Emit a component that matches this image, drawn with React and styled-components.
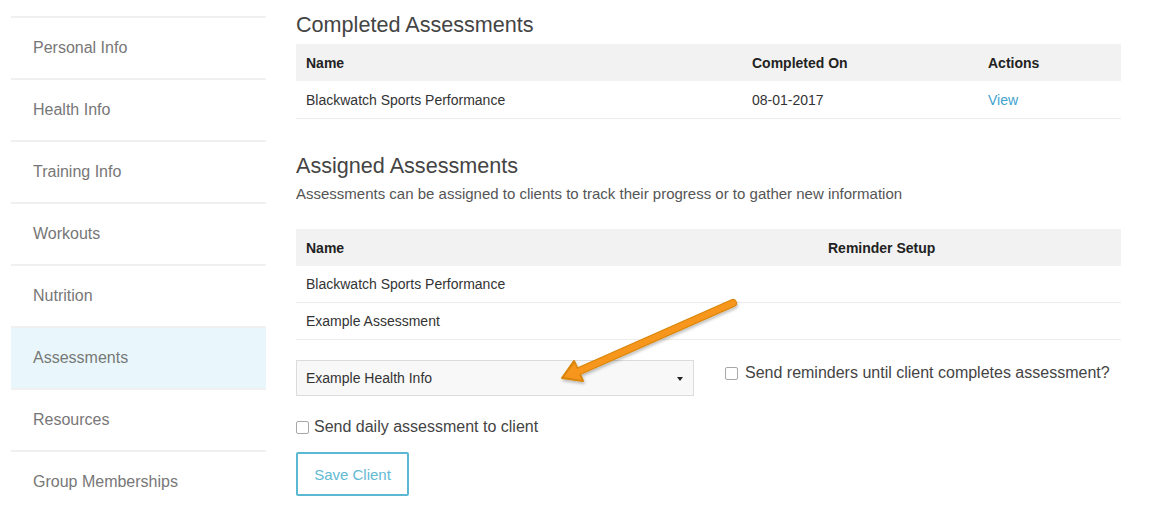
import React from "react";
import styled, { createGlobalStyle } from "styled-components";

const GlobalStyle = createGlobalStyle`
  html, body {
    margin: 0;
    padding: 0;
    background: #fff;
    font-family: "Liberation Sans", Arial, sans-serif;
    color: #333;
  }
`;

const Page = styled.div`
  position: relative;
  display: flex;
  gap: 30px;
  width: 1151px;
  height: 511px;
  overflow: hidden;
  padding-left: 11px;
  box-sizing: border-box;
`;

const Sidebar = styled.ul`
  list-style: none;
  margin: 0;
  padding: 16px 0 0;
  width: 255px;
  flex-shrink: 0;
`;

const NavItem = styled.li`
  display: flex;
  align-items: center;
  height: 60px;
  padding-left: 22px;
  border-top: 2px solid #f0f0f0;
  background: ${(p) => (p.active ? "#e9f7fc" : "transparent")};
  color: #777;
  font-size: 16px;
`;

const Main = styled.div`
  width: 825px;
  padding-top: 12px;
`;

const Heading = styled.h2`
  margin: ${(p) => (p.spaced ? "34px" : "0")} 0 6px;
  font-size: 21.6px;
  font-weight: normal;
  line-height: 26px;
  color: #444;
`;

const Intro = styled.p`
  margin: 2px 0 26px;
  font-size: 15px;
  line-height: 18px;
  color: #555;
`;

const Table = styled.table`
  width: 100%;
  table-layout: fixed;
  border-collapse: collapse;
  font-size: 14px;
`;

const Th = styled.th`
  text-align: left;
  font-weight: bold;
  background: #f2f2f2;
  height: 37px;
  padding: 0 10px;
  box-sizing: border-box;
  width: ${(p) => p.w || "auto"};
  color: #222;
`;

const Td = styled.td`
  height: ${(p) => p.h || "36px"};
  padding: 0 10px;
  border-bottom: 1px solid #ececec;
  color: #333;
`;

const Link = styled.a`
  color: #3fa3cf;
  text-decoration: none;
`;

const FormRow = styled.div`
  display: flex;
  align-items: flex-start;
  gap: 31px;
  margin-top: 20px;
`;

const Select = styled.div`
  position: relative;
  display: flex;
  align-items: center;
  width: 398px;
  height: 36px;
  padding: 0 9px;
  box-sizing: border-box;
  background: #f8f8f8;
  border: 1px solid #dcdcdc;
  font-size: 14px;
  color: #333;
`;

const Caret = styled.span`
  position: absolute;
  right: 10px;
  top: 16px;
  border-left: 3px solid transparent;
  border-right: 3px solid transparent;
  border-top: 4px solid #222;
`;

const CheckLabel = styled.label`
  display: flex;
  align-items: center;
  gap: ${(p) => p.gap || "7px"};
  margin-top: ${(p) => p.top || "0"};
  font-size: 16px;
  color: #444;
`;

const Box = styled.span`
  display: inline-block;
  width: 11px;
  height: 11px;
  border: 1px solid #a8a8a8;
  border-radius: 2px;
  background: #fff;
  flex-shrink: 0;
`;

const Button = styled.button`
  margin-top: 16px;
  width: 113px;
  height: 44px;
  border: 2px solid #5bb8d2;
  border-radius: 2px;
  background: #fff;
  color: #62bad3;
  font-family: inherit;
  font-size: 15px;
`;

const Overlay = styled.svg`
  position: absolute;
  left: 0;
  top: 0;
  pointer-events: none;
`;

const nav = [
  "Personal Info",
  "Health Info",
  "Training Info",
  "Workouts",
  "Nutrition",
  "Assessments",
  "Resources",
  "Group Memberships",
];

export default function App() {
  return (
    <Page>
      <GlobalStyle />
      <Sidebar>
        {nav.map((n) => (
          <NavItem key={n} active={n === "Assessments"}>
            {n}
          </NavItem>
        ))}
      </Sidebar>
      <Main>
        <Heading>Completed Assessments</Heading>
        <Table>
          <thead>
            <tr>
              <Th w="446px">Name</Th>
              <Th w="236px">Completed On</Th>
              <Th>Actions</Th>
            </tr>
          </thead>
          <tbody>
            <tr>
              <Td h="37px">Blackwatch Sports Performance</Td>
              <Td h="37px">08-01-2017</Td>
              <Td h="37px">
                <Link href="#">View</Link>
              </Td>
            </tr>
          </tbody>
        </Table>

        <Heading spaced>Assigned Assessments</Heading>
        <Intro>
          Assessments can be assigned to clients to track their progress or to
          gather new information
        </Intro>
        <Table>
          <thead>
            <tr>
              <Th w="522px">Name</Th>
              <Th>Reminder Setup</Th>
            </tr>
          </thead>
          <tbody>
            <tr>
              <Td>Blackwatch Sports Performance</Td>
              <Td />
            </tr>
            <tr>
              <Td>Example Assessment</Td>
              <Td />
            </tr>
          </tbody>
        </Table>

        <FormRow>
          <Select>
            Example Health Info
            <Caret />
          </Select>
          <CheckLabel top="4px">
            <Box />
            Send reminders until client completes assessment?
          </CheckLabel>
        </FormRow>
        <CheckLabel top="22px" gap="5px">
          <Box />
          Send daily assessment to client
        </CheckLabel>
        <Button>Save Client</Button>
      </Main>

      <Overlay width="1151" height="511" viewBox="0 0 1151 511">
        <defs>
          <filter id="sh" x="-10%" y="-10%" width="130%" height="130%">
            <feDropShadow dx="1" dy="2" stdDeviation="1.5" floodColor="#000" floodOpacity="0.25" />
          </filter>
        </defs>
        <g filter="url(#sh)">
          <line x1="733" y1="303" x2="577" y2="372" stroke="#d98508" strokeWidth="8" strokeLinecap="round" />
          <polygon points="562,378 574,361 583,381" fill="#d98508" stroke="#d98508" strokeWidth="2" strokeLinejoin="round" />
          <line x1="733" y1="303" x2="577" y2="372" stroke="#f7961c" strokeWidth="6" strokeLinecap="round" />
          <polygon points="564,377 574.5,363 581.5,380" fill="#f7961c" />
        </g>
      </Overlay>
    </Page>
  );
}
